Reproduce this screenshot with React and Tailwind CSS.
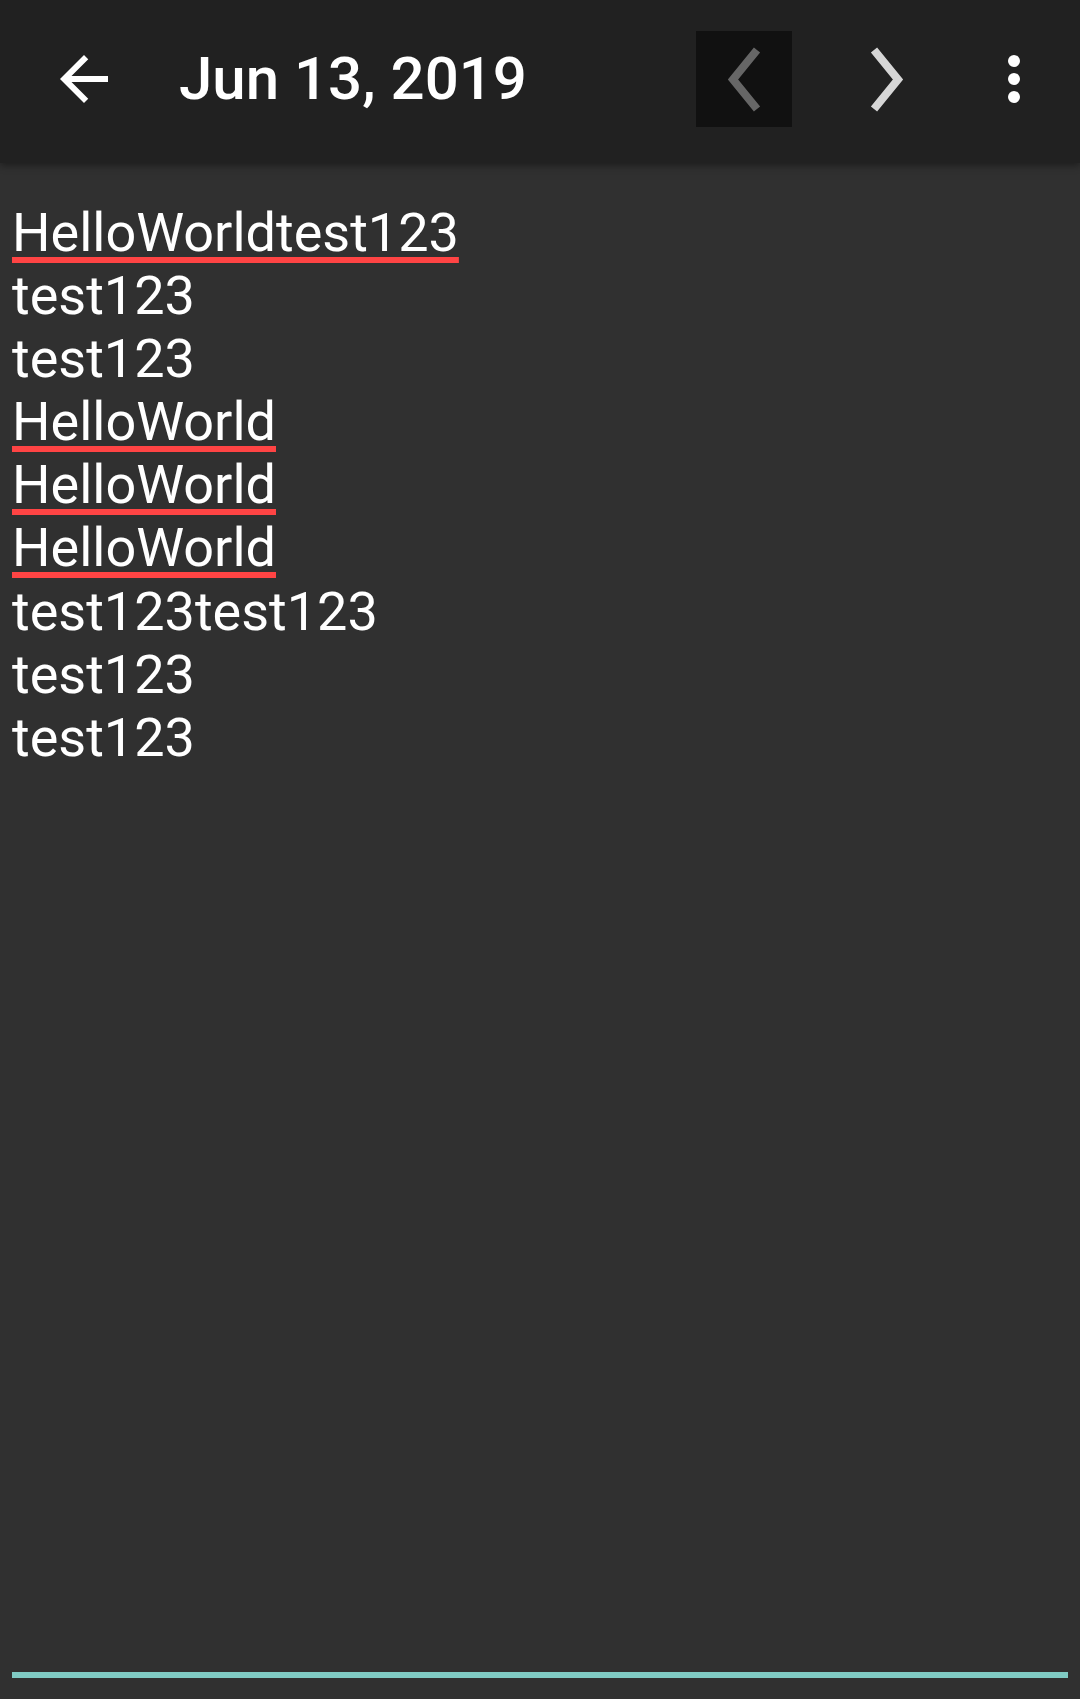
import React from 'react';

const lines = [
  { text: 'HelloWorldtest123', flagged: true },
  { text: 'test123' },
  { text: 'test123' },
  { text: 'HelloWorld', flagged: true },
  { text: 'HelloWorld', flagged: true },
  { text: 'HelloWorld', flagged: true },
  { text: 'test123test123' },
  { text: 'test123' },
  { text: 'test123' },
];

const App = () => {
  return (
    <div className="h-[1699px] w-[1080px] flex flex-col bg-[#303030] overflow-hidden font-['Roboto',sans-serif] text-white">
      {/* Toolbar */}
      <div className="relative z-10 h-[163px] pb-[5px] flex items-center bg-[#212121] shadow-[0_2px_8px_rgba(0,0,0,0.45)]">
        <button className="ml-[48px] w-[72px] h-[72px] flex items-center justify-center">
          <svg viewBox="0 0 24 24" className="w-[72px] h-[72px]" fill="#ffffff">
            <path d="M20 11H7.83l5.59-5.59L12 4l-8 8 8 8 1.41-1.41L7.83 13H20v-2z" />
          </svg>
        </button>
        <h1 className="ml-[59px] flex-1 text-[60px] leading-none font-medium text-white">Jun 13, 2019</h1>

        <button className="w-[96px] h-[96px] bg-[#111111] flex items-center justify-center">
          <svg viewBox="0 0 96 96" className="w-[96px] h-[96px]" fill="none">
            <polyline points="61,19 37,48.5 61,78" stroke="#666666" strokeWidth="8" strokeLinejoin="miter" />
          </svg>
        </button>
        <button className="ml-[48px] w-[96px] h-[96px] flex items-center justify-center">
          <svg viewBox="0 0 96 96" className="w-[96px] h-[96px]" fill="none">
            <polyline points="34,19 58,48.5 34,78" stroke="#d6d6d6" strokeWidth="8" strokeLinejoin="miter" />
          </svg>
        </button>
        <button className="ml-[42px] mr-[30px] w-[72px] h-[72px] flex items-center justify-center">
          <svg viewBox="0 0 24 24" className="w-[72px] h-[72px]" fill="#ffffff">
            <circle cx="12" cy="6" r="2" />
            <circle cx="12" cy="12" r="2" />
            <circle cx="12" cy="18" r="2" />
          </svg>
        </button>
      </div>

      {/* Note body */}
      <div className="flex-1 pt-[38px] pl-[12px] text-[54px] leading-[63.1px]">
        {lines.map((line, i) => (
          <div key={i} className="whitespace-pre">
            {line.flagged ? (
              <span className="underline decoration-[#ff4444] decoration-[6px] underline-offset-[6px]">{line.text}</span>
            ) : (
              line.text
            )}
          </div>
        ))}
      </div>

      {/* Edit underline */}
      <div className="px-[12px] pb-[21px]">
        <div className="h-[6px] bg-[#80cbc4]"></div>
      </div>
    </div>
  );
};

export default App;
